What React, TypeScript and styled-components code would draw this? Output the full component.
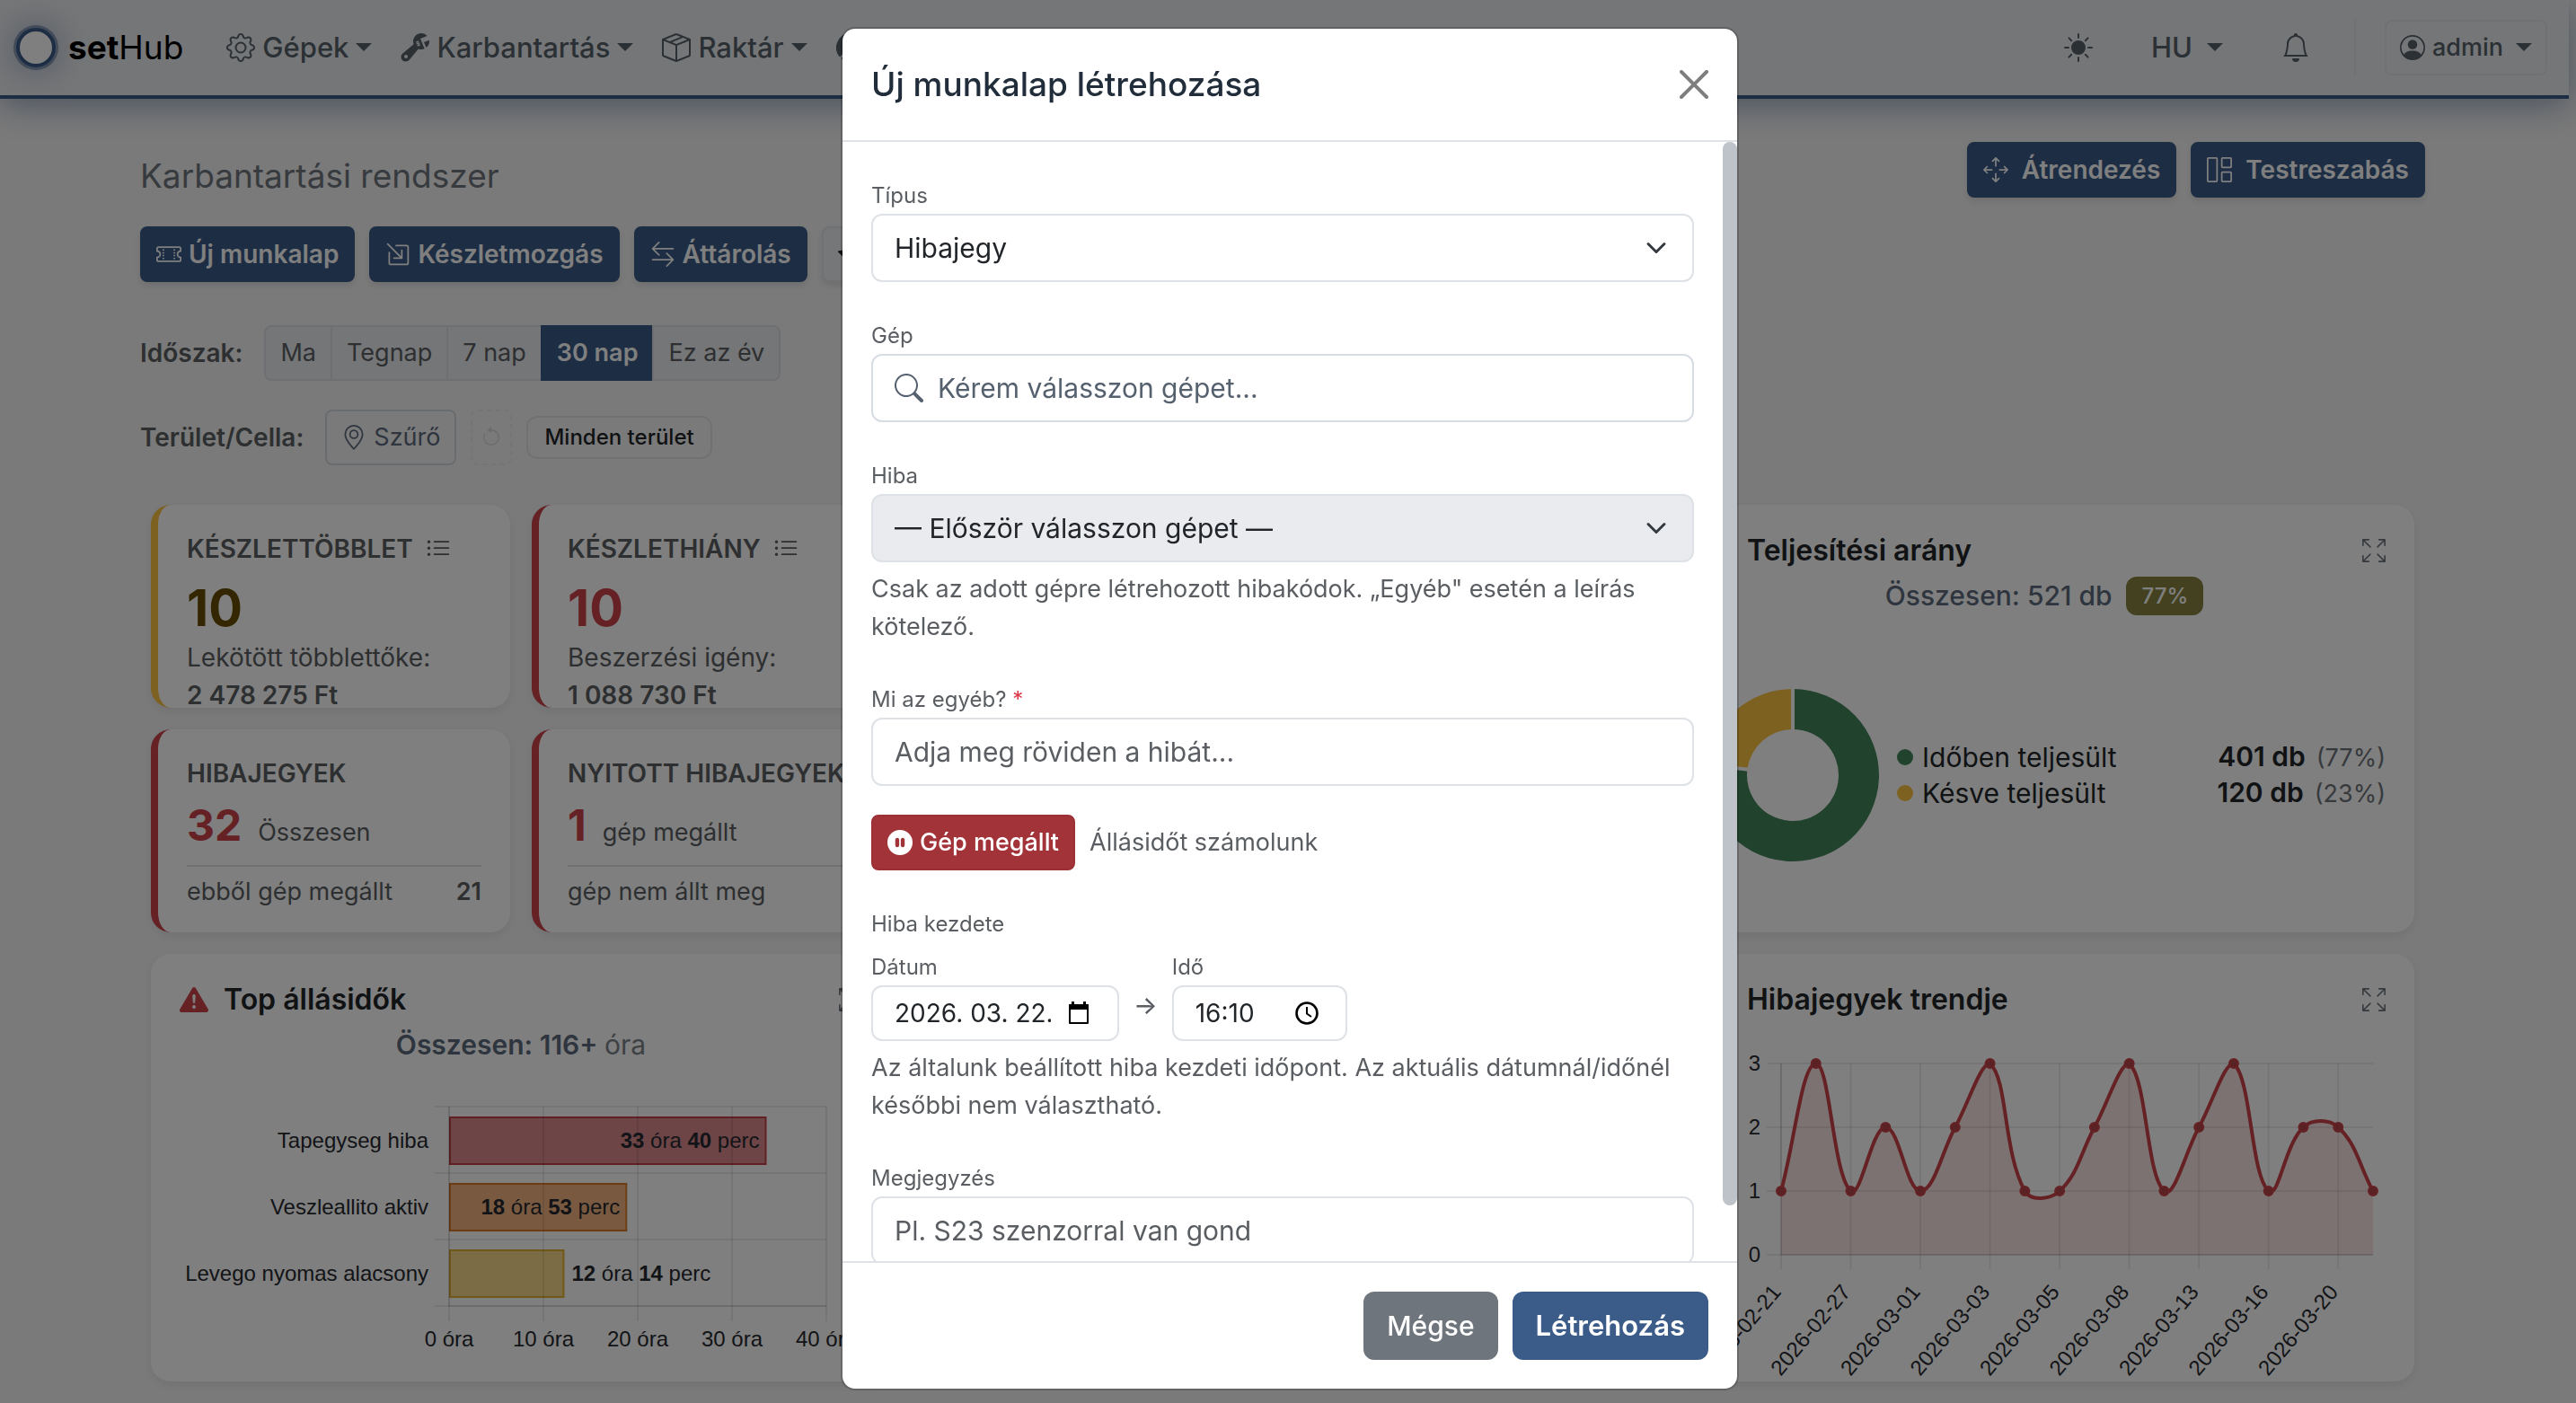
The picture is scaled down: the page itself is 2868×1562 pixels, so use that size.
import React from "react";
import styled, { createGlobalStyle, css } from "styled-components";
import {
  BsGear,
  BsWrenchAdjustable,
  BsBoxSeam,
  BsPieChartFill,
  BsSunFill,
  BsBell,
  BsPersonCircle,
  BsTicketPerforated,
  BsBoxArrowInDownRight,
  BsArrowLeftRight,
  BsStarFill,
  BsArrowsMove,
  BsGrid1X2,
  BsGeoAlt,
  BsArrowCounterclockwise,
  BsListUl,
  BsExclamationTriangleFill,
  BsArrowsFullscreen,
  BsCheckCircle,
  BsGraphUp,
  BsSearch,
  BsPauseCircleFill,
} from "react-icons/bs";

const color = {
  primary: "#3b5b88",
  ink: "#212529",
  slate: "#5c6b7c",
  muted: "#5a5e62",
  line: "#dee2e6",
  red: "#ca4248",
  yellow: "#f8c343",
  green: "#42855b",
};

const GlobalStyle = createGlobalStyle`
  *, *::before, *::after { box-sizing: border-box; }
  body {
    margin: 0;
    background: #f5f5f5;
    color: ${color.ink};
    font-family: Inter, "Liberation Sans", sans-serif;
    font-size: 28px;
    line-height: 42px;
  }
  button, input, select { font-family: inherit; margin: 0; }
  h1, h2, h3, p, ul { margin: 0; padding: 0; }
  ul { list-style: none; }
  svg { display: block; flex: none; }
`;

/* ---------- navigation ---------- */

const Navbar = styled.header`
  display: flex;
  align-items: center;
  justify-content: space-between;
  height: 110px;
  margin-right: 8px;
  padding: 0 24px 0 18px;
  background: #ebedf0;
  border-bottom: 4px solid ${color.primary};
  box-shadow: 0 8px 36px rgba(60, 90, 136, 0.5);
`;

const NavSide = styled.div`
  display: flex;
  align-items: center;
`;

const Brand = styled.a`
  display: flex;
  align-items: center;
  gap: 14px;
  margin-right: 48px;
  color: #000;
  font-size: 37px;
  line-height: 60px;
  text-decoration: none;
  b { font-weight: 700; }
`;

const BrandMark = styled.span`
  width: 44px;
  height: 44px;
  border: 4px solid ${color.primary};
  border-radius: 50%;
  background: #fff;
  box-shadow: 0 0 0 3px rgba(60, 90, 136, 0.5), 0 0 40px rgba(60, 90, 136, 0.6);
`;

const NavMenu = styled.nav`
  display: flex;
  gap: 32px;
`;

const NavButton = styled.button`
  display: flex;
  align-items: center;
  gap: 8px;
  padding: 0;
  border: 0;
  background: none;
  color: #56606b;
  font-size: 31px;
  font-weight: 500;
  line-height: 48px;
`;

const Caret = styled.span`
  margin-bottom: 2px;
  border-top: 9px solid currentColor;
  border-left: 9px solid transparent;
  border-right: 9px solid transparent;
`;

const NavTools = styled(NavSide)`
  gap: 65px;
`;

const LanguageButton = styled(NavButton)`
  gap: 16px;
`;

const AccountArea = styled.div`
  display: flex;
  align-items: center;
  height: 62px;
  margin-left: -16px;
  padding-left: 32px;
  border-left: 2px solid ${color.line};
`;

const AccountButton = styled(NavButton)`
  height: 62px;
  padding: 0 15px;
  border: 2px solid ${color.line};
  border-radius: 8px;
  font-size: 27px;
  ${Caret} { margin-left: 6px; }
`;

/* ---------- page head ---------- */

const Page = styled.main`
  padding: 48px 168px 24px 156px;
`;

const PageHead = styled.div`
  display: flex;
  justify-content: space-between;
  align-items: flex-start;
`;

const PageTitle = styled.h1`
  padding-top: 14px;
  margin-bottom: 32px;
  color: #6f757c;
  font-size: 37px;
  font-weight: 400;
  line-height: 48px;
`;

const Actions = styled.div<{ $iconGap?: number }>`
  display: flex;
  gap: 16px;
  button { gap: ${(p) => p.$iconGap ?? 8}px; }
`;

const Button = styled.button<{ $plain?: boolean }>`
  display: flex;
  align-items: center;
  height: 62px;
  padding: 0 16px;
  border: 2px solid ${(p) => (p.$plain ? color.line : color.primary)};
  border-radius: 8px;
  background: ${(p) => (p.$plain ? "#eceef1" : color.primary)};
  color: ${(p) => (p.$plain ? color.ink : "#fff")};
  box-shadow: 0 4px 8px rgba(0, 0, 0, 0.1);
  font-size: 28px;
  font-weight: 600;
  line-height: 42px;
`;

const FilterRow = styled.div`
  display: flex;
  align-items: center;
  gap: 16px;
  height: 62px;
`;

const Filters = styled.section`
  display: flex;
  flex-direction: column;
  gap: 32px;
  margin: 48px 0 44px;
`;

const FilterLabel = styled.span`
  margin-right: 8px;
  color: ${color.muted};
  font-weight: 600;
`;

const Segments = styled.div`
  display: flex;
`;

const Segment = styled.button<{ $active?: boolean }>`
  height: 62px;
  padding: 0 16px;
  border: 2px solid ${(p) => (p.$active ? color.primary : "#dcdfe4")};
  background: ${(p) => (p.$active ? color.primary : "#ebedf0")};
  color: ${(p) => (p.$active ? "#fff" : color.muted)};
  font-size: 27px;
  font-weight: ${(p) => (p.$active ? 600 : 400)};
  line-height: 42px;
  &:not(:first-child) { margin-left: -2px; }
  &:first-child { border-radius: 8px 0 0 8px; }
  &:last-child { border-radius: 0 8px 8px 0; }
`;

const FilterButton = styled.button`
  display: flex;
  align-items: center;
  gap: 8px;
  height: 62px;
  padding: 0 16px;
  border: 2px solid #d3d8df;
  border-radius: 8px;
  background: transparent;
  color: ${color.slate};
  font-size: 27px;
  line-height: 42px;
`;

const ResetButton = styled(FilterButton)`
  padding: 0 9px;
  border: 2px dashed ${color.line};
  color: #b9bec4;
  opacity: 0.5;
`;

const AreaTag = styled.span`
  padding: 0 18px;
  border: 2px solid ${color.line};
  border-radius: 12px;
  color: ${color.ink};
  font-size: 24px;
  font-weight: 500;
  line-height: 44px;
`;

/* ---------- dashboard ---------- */

const Board = styled.section`
  display: grid;
  grid-template-columns: repeat(6, minmax(0, 1fr));
  grid-auto-rows: 226px;
  gap: 24px;
  margin: 0 12px;
`;

const cardBase = css`
  overflow: hidden;
  border-radius: 22px;
  background: #fff;
  box-shadow: 0 4px 12px rgba(0, 0, 0, 0.08);
`;

const StatCard = styled.article<{ $accent: string; $column: number }>`
  ${cardBase}
  grid-column: ${(p) => p.$column};
  padding: 32px 32px 0;
  border-left: 8px solid ${(p) => p.$accent};
  color: ${color.muted};
`;

const StatTitle = styled.h3`
  display: flex;
  align-items: center;
  gap: 14px;
  font-size: 28px;
  font-weight: 600;
  line-height: 34px;
  white-space: nowrap;
`;

const StatNumber = styled.p<{ $tone: string }>`
  margin-top: 16px;
  color: ${(p) => p.$tone};
  font-size: 56px;
  font-weight: 700;
  line-height: 67px;
`;

const StatLine = styled.p`
  display: flex;
  align-items: baseline;
  gap: 18px;
  height: 58px;
  margin-top: 12px;
  font-size: 27px;
  line-height: 58px;
  b {
    color: ${color.red};
    font-size: 48px;
    font-weight: 700;
  }
`;

const StatFoot = styled.p`
  display: flex;
  justify-content: space-between;
  margin-top: 15px;
  padding-top: 7px;
  border-top: 2px solid ${color.line};
  font-size: 27px;
`;

const Strong = styled.strong`
  font-weight: 600;
`;

const ChartCard = styled.article<{ $column: number }>`
  ${cardBase}
  display: flex;
  flex-direction: column;
  grid-column: ${(p) => p.$column} / span 2;
  grid-row: span 2;
  padding: 32px 32px 0;
`;

const ChartHead = styled.div`
  display: flex;
  align-items: center;
  gap: 17px;
  height: 38px;
  h2 {
    flex: 1;
    color: ${color.ink};
    font-size: 32px;
    font-weight: 600;
    line-height: 38px;
  }
`;

const ExpandButton = styled.button`
  padding: 0;
  border: 0;
  background: none;
  color: #6c757d;
`;

const ChartTotal = styled.p`
  display: flex;
  align-items: center;
  justify-content: center;
  gap: 16px;
  margin-top: 7px;
  color: ${color.slate};
  font-size: 30px;
  font-weight: 600;
  line-height: 48px;
  small {
    color: #7c8288;
    font-size: 30px;
    font-weight: 400;
  }
`;

const Medium = styled.span`
  font-weight: 500;
`;

const Badge = styled.span`
  padding: 0 17px;
  border-radius: 12px;
  background: #86823f;
  color: #fff;
  font-size: 24px;
  font-weight: 500;
  line-height: 43px;
`;

const DonutBody = styled.div`
  display: flex;
  flex: 1;
  align-items: center;
  gap: 16px;
`;

const Legend = styled.ul`
  flex: 1;
  color: ${color.ink};
  font-size: 30px;
  line-height: 40px;
`;

const LegendRow = styled.li`
  display: flex;
  align-items: center;
  gap: 10px;
  height: 40px;
`;

const Dot = styled.span<{ $fill: string }>`
  width: 18px;
  height: 18px;
  border-radius: 50%;
  background: ${(p) => p.$fill};
`;

const LegendValue = styled.span`
  margin-left: auto;
  small {
    margin-left: 12px;
    color: #6f757b;
    font-size: 27px;
  }
`;

const Plot = styled.svg`
  width: 100%;
  height: auto;
  overflow: visible;
  font-family: "Liberation Sans", Arial, sans-serif;
  font-size: 24px;
`;

/* ---------- dialog ---------- */

const Backdrop = styled.div`
  position: fixed;
  inset: 0;
  display: flex;
  justify-content: center;
  padding: 30px 0 14px 4px;
  background: rgba(0, 0, 0, 0.5);
`;

const Dialog = styled.form`
  display: flex;
  flex-direction: column;
  width: 1000px;
  overflow: hidden;
  border: 2px solid rgba(0, 0, 0, 0.18);
  border-radius: 16px;
  background: #fff;
  background-clip: padding-box;
`;

const DialogHead = styled.div`
  display: flex;
  align-items: center;
  justify-content: space-between;
  height: 126px;
  padding: 0 32px;
  border-bottom: 2px solid ${color.line};
  h2 {
    color: #212d3a;
    font-size: 37px;
    font-weight: 500;
    line-height: 60px;
  }
`;

const CloseButton = styled.button`
  padding: 0;
  border: 0;
  background: none;
  color: #000;
  opacity: 0.5;
`;

const DialogMain = styled.div`
  display: flex;
  flex: 1;
  min-height: 0;
`;

const DialogBody = styled.div`
  display: flex;
  flex: 1;
  flex-direction: column;
  gap: 42px;
  min-width: 0;
  overflow: hidden;
  padding: 42px 32px;
`;

const ScrollRail = styled.div`
  width: 16px;
`;

const ScrollThumb = styled.div`
  height: 95%;
  border-radius: 8px;
  background: #bdc3c8;
`;

const Field = styled.div`
  flex: none;
`;

const Label = styled.label`
  display: block;
  margin-bottom: 2px;
  color: ${color.muted};
  font-size: 24px;
  line-height: 36px;
  em {
    color: #dc3545;
    font-style: normal;
  }
`;

const controlStyle = css`
  display: block;
  width: 100%;
  height: 76px;
  padding: 0 24px;
  border: 2px solid ${color.line};
  border-radius: 12px;
  background: #fff;
  color: ${color.ink};
  font-size: 30px;
  line-height: 48px;
  outline: 0;
  &::placeholder { color: ${color.muted}; opacity: 1; }
`;

const Input = styled.input`
  ${controlStyle}
`;

const Select = styled.select`
  ${controlStyle}
  appearance: none;
  &:disabled { background: #e9ebef; opacity: 1; }
`;

const SelectBox = styled.div`
  position: relative;
  svg {
    position: absolute;
    top: 26px;
    right: 30px;
    pointer-events: none;
  }
`;

const SearchBox = styled.div`
  display: flex;
  align-items: center;
  gap: 16px;
  height: 76px;
  padding: 0 24px;
  border: 2px solid #d6dce2;
  border-radius: 12px;
  color: #56616f;
  input {
    flex: 1;
    min-width: 0;
    padding: 0;
    border: 0;
    outline: 0;
    color: inherit;
    font-size: 30px;
    line-height: 48px;
  }
  input::placeholder { color: inherit; opacity: 1; }
`;

const Help = styled.p`
  margin-top: 9px;
  color: ${color.muted};
  font-size: 27px;
`;

const StopRow = styled.div`
  display: flex;
  align-items: center;
  gap: 16px;
  margin-top: 32px;
  color: ${color.muted};
  font-size: 27px;
`;

const StopButton = styled.button`
  display: flex;
  align-items: center;
  gap: 8px;
  height: 62px;
  padding: 0 16px;
  border: 2px solid #9b3036;
  border-radius: 8px;
  background: #a23439;
  color: #fff;
  font-size: 27px;
  font-weight: 500;
  line-height: 42px;
`;

const GroupLabel = styled.p`
  margin-bottom: 12px;
  color: ${color.muted};
  font-size: 24px;
  line-height: 36px;
`;

const MomentRow = styled.div`
  display: flex;
  align-items: center;
  gap: 16px;
  color: ${color.muted};
`;

const Arrow = styled.span`
  padding-top: 20px;
  font-weight: 500;
`;

const Picker = styled.div<{ $width: number }>`
  width: ${(p) => p.$width}px;
`;

const PickerBox = styled.div`
  display: flex;
  align-items: center;
  justify-content: space-between;
  height: 62px;
  padding: 0 30px 0 24px;
  border: 2px solid ${color.line};
  border-radius: 12px;
  input {
    width: 80%;
    min-width: 0;
    padding: 0;
    border: 0;
    outline: 0;
    background: none;
    color: ${color.ink};
    font-size: 28px;
    line-height: 42px;
  }
`;

const DialogFoot = styled.div`
  display: flex;
  justify-content: flex-end;
  gap: 16px;
  padding: 32px;
  border-top: 2px solid ${color.line};
`;

const FootButton = styled.button<{ $main?: boolean }>`
  height: 76px;
  padding: 0 26px;
  border: 0;
  border-radius: 12px;
  background: ${(p) => (p.$main ? color.primary : "#6e757c")};
  color: #fff;
  font-size: ${(p) => (p.$main ? 31 : 30)}px;
  font-weight: ${(p) => (p.$main ? 600 : 500)};
  line-height: 48px;
`;

/* ---------- charts ---------- */

const downtime = [
  { label: "Tapegyseg hiba", hours: 33, minutes: 40, fill: "#db8a8e", stroke: "#c24248" },
  { label: "Veszleallito aktiv", hours: 18, minutes: 53, fill: "#f3b583", stroke: "#d97b24" },
  { label: "Levego nyomas alacsony", hours: 12, minutes: 14, fill: "#f7d98b", stroke: "#e0b030" },
];

function DowntimeChart() {
  const x0 = 300;
  const step = 105;
  const top = 45;
  const row = 74;
  const bottom = top + row * 3 + 1;
  return (
    <Plot viewBox="0 0 760 340">
      {downtime.map((d, i) => {
        const w = ((d.hours + d.minutes / 60) * step) / 10;
        return (
          <rect
            key={d.label}
            x={x0 + 1}
            y={top + 12 + row * i}
            width={w - 2}
            height={52}
            fill={d.fill}
            stroke={d.stroke}
            strokeWidth={2}
          />
        );
      })}
      <g stroke="#000" strokeOpacity={0.08} strokeWidth={2}>
        {[0, 1, 2, 3, 4].map((i) => (
          <line key={i} x1={x0 + i * step} x2={x0 + i * step} y1={top} y2={bottom + 16} />
        ))}
        {[0, 1, 2, 3].map((i) => (
          <line key={i} x1={x0 - 16} x2={x0 + step * 4} y1={top + i * row} y2={top + i * row} />
        ))}
        <line x1={x0} x2={x0} y1={top} y2={bottom} />
        <line x1={x0} x2={x0 + step * 4} y1={bottom - 1} y2={bottom - 1} />
      </g>
      {downtime.map((d, i) => {
        const w = ((d.hours + d.minutes / 60) * step) / 10;
        const inside = w > 180;
        const y = top + 46 + row * i;
        return (
          <g key={d.label} fill="#26292e">
            <text x={277} y={y} textAnchor="end">{d.label}</text>
            <text x={x0 + (inside ? w - 8 : w + 8)} y={y} textAnchor={inside ? "end" : "start"}>
              <tspan fontWeight={700}>{d.hours}</tspan> óra <tspan fontWeight={700}>{d.minutes}</tspan> perc
            </text>
          </g>
        );
      })}
      {[0, 10, 20, 30, 40].map((h, i) => (
        <text key={h} x={x0 + i * step} y={312} textAnchor="middle" fill="#26292e">
          {h} óra
        </text>
      ))}
    </Plot>
  );
}

const trend = [1, 3, 1, 2, 1, 2, 3, 1, 1, 2, 3, 1, 2, 3, 1, 2, 2, 1];
const trendDates = [
  "2026-02-21", "2026-02-27", "2026-03-01", "2026-03-03", "2026-03-05",
  "2026-03-08", "2026-03-13", "2026-03-16", "2026-03-20",
];

function TrendChart() {
  const left = 87;
  const right = 746;
  const top = 52;
  const unit = 71;
  const base = top + unit * 3;
  const gap = (right - left) / (trend.length - 1);
  const pts = trend.map((v, i) => ({ x: left + i * gap, y: base - v * unit }));
  const tension = 0.4;
  const clamp = (y: number) => Math.max(top, Math.min(base, y));
  const handles = pts.map((p, i) => {
    const prev = pts[i - 1] ?? p;
    const next = pts[i + 1] ?? p;
    const a = Math.hypot(p.x - prev.x, p.y - prev.y);
    const b = Math.hypot(next.x - p.x, next.y - p.y);
    const fa = (tension * a) / (a + b);
    const fb = (tension * b) / (a + b);
    return {
      before: { x: p.x - fa * (next.x - prev.x), y: clamp(p.y - fa * (next.y - prev.y)) },
      after: { x: p.x + fb * (next.x - prev.x), y: clamp(p.y + fb * (next.y - prev.y)) },
    };
  });
  let line = `M${pts[0].x} ${pts[0].y}`;
  for (let i = 1; i < pts.length; i++) {
    const c1 = handles[i - 1].after;
    const c2 = handles[i].before;
    line += `C${c1.x} ${c1.y} ${c2.x} ${c2.y} ${pts[i].x} ${pts[i].y}`;
  }
  return (
    <Plot viewBox="0 0 760 406">
      <g stroke="#000" strokeOpacity={0.08} strokeWidth={2}>
        {[0, 1, 2, 3].map((v) => (
          <line key={v} x1={left - 16} x2={right} y1={base - v * unit} y2={base - v * unit} />
        ))}
        {trendDates.map((d, i) => (
          <line key={d} x1={left + i * 2 * gap} x2={left + i * 2 * gap} y1={top} y2={base + 16} />
        ))}
        <line x1={left} x2={left} y1={top} y2={base} />
        <line x1={left} x2={right} y1={base} y2={base} />
      </g>
      <path d={`${line}L${right} ${base}L${left} ${base}Z`} fill="#c8463c" fillOpacity={0.14} />
      <path d={line} fill="none" stroke={color.red} strokeWidth={4} />
      {pts.map((p, i) => (
        <circle key={i} cx={p.x} cy={p.y} r={5} fill="#b5454a" stroke={color.red} strokeWidth={2} />
      ))}
      {[0, 1, 2, 3].map((v) => (
        <text key={v} x={64} y={base - v * unit + 8} textAnchor="end" fill="#26292e">{v}</text>
      ))}
      {trendDates.map((d, i) => (
        <text
          key={d}
          transform={`translate(${left + i * 2 * gap + 1} 307) rotate(-50)`}
          textAnchor="end"
          fill="#26292e"
        >
          {d}
        </text>
      ))}
    </Plot>
  );
}

function Donut() {
  const r = 96;
  const inner = 51;
  const at = (share: number, radius: number) => {
    const t = share * Math.PI * 2;
    return `${100 + radius * Math.sin(t)} ${100 - radius * Math.cos(t)}`;
  };
  const slice = (from: number, to: number) => {
    const big = to - from > 0.5 ? 1 : 0;
    return `M${at(from, r)}A${r} ${r} 0 ${big} 1 ${at(to, r)}L${at(to, inner)}A${inner} ${inner} 0 ${big} 0 ${at(from, inner)}Z`;
  };
  const split = 401 / 521;
  return (
    <svg width={200} height={200} viewBox="0 0 200 200">
      <path d={slice(0, split)} fill={color.green} />
      <path d={slice(split, 1)} fill={color.yellow} />
      <path d={`M${at(0, 50)}L${at(0, 98)}M${at(split, 50)}L${at(split, 98)}`} stroke="#fff" strokeWidth={4} />
    </svg>
  );
}

/* ---------- small drawings ---------- */

const Chevron = () => (
  <svg width={24} height={24} viewBox="0 0 16 16" fill="none" stroke="#343a40" strokeWidth={2} strokeLinecap="round" strokeLinejoin="round">
    <path d="m2 5 6 6 6-6" />
  </svg>
);

const CloseIcon = () => (
  <svg width={32} height={32} viewBox="0 0 16 16" fill="currentColor">
    <path d="M.293.293a1 1 0 0 1 1.414 0L8 6.586 14.293.293a1 1 0 1 1 1.414 1.414L9.414 8l6.293 6.293a1 1 0 0 1-1.414 1.414L8 9.414l-6.293 6.293a1 1 0 0 1-1.414-1.414L6.586 8 .293 1.707a1 1 0 0 1 0-1.414z" />
  </svg>
);

const CalendarIcon = () => (
  <svg width={26} height={26} viewBox="0 0 26 26">
    <path d="M3 4h20v20H3z" fill="none" stroke="#000" strokeWidth={2} strokeLinejoin="round" />
    <path d="M2 3h22v6H2zM5 0h3v4H5zM18 0h3v4h-3z" fill="#000" />
  </svg>
);

const ClockIcon = () => (
  <svg width={26} height={26} viewBox="0 0 26 26" fill="none" stroke="#000">
    <circle cx={13} cy={13} r={11.5} strokeWidth={2.6} />
    <path d="M13 6v7.5l5 3.5" strokeWidth={2} />
  </svg>
);

const Expand = () => (
  <ExpandButton type="button" aria-label="Nagyítás">
    <BsArrowsFullscreen size={26} />
  </ExpandButton>
);

export default function App() {
  return (
    <>
      <GlobalStyle />
      <Navbar>
        <NavSide>
          <Brand href="#">
            <BrandMark />
            <span>
              <b>set</b>Hub
            </span>
          </Brand>
          <NavMenu>
            <NavButton type="button"><BsGear size={32} />Gépek<Caret /></NavButton>
            <NavButton type="button"><BsWrenchAdjustable size={32} />Karbantartás<Caret /></NavButton>
            <NavButton type="button"><BsBoxSeam size={32} />Raktár<Caret /></NavButton>
            <NavButton type="button" aria-label="Továbbiak"><BsPieChartFill size={32} /></NavButton>
          </NavMenu>
        </NavSide>
        <NavTools>
          <NavButton type="button" aria-label="Téma"><BsSunFill size={32} /></NavButton>
          <LanguageButton type="button">HU<Caret /></LanguageButton>
          <NavButton type="button" aria-label="Értesítések"><BsBell size={32} /></NavButton>
          <AccountArea>
            <AccountButton type="button"><BsPersonCircle size={28} />admin<Caret /></AccountButton>
          </AccountArea>
        </NavTools>
      </Navbar>

      <Page>
        <PageHead>
          <div>
            <PageTitle>Karbantartási rendszer</PageTitle>
            <Actions>
              <Button type="button"><BsTicketPerforated size={28} />Új munkalap</Button>
              <Button type="button"><BsBoxArrowInDownRight size={28} />Készletmozgás</Button>
              <Button type="button"><BsArrowLeftRight size={28} />Áttárolás</Button>
              <Button type="button" $plain aria-label="Kedvencek"><BsStarFill size={28} /></Button>
            </Actions>
          </div>
          <Actions $iconGap={15}>
            <Button type="button"><BsArrowsMove size={28} />Átrendezés</Button>
            <Button type="button"><BsGrid1X2 size={28} />Testreszabás</Button>
          </Actions>
        </PageHead>

        <Filters>
          <FilterRow>
            <FilterLabel>Időszak:</FilterLabel>
            <Segments>
              <Segment type="button">Ma</Segment>
              <Segment type="button">Tegnap</Segment>
              <Segment type="button">7 nap</Segment>
              <Segment type="button" $active>30 nap</Segment>
              <Segment type="button">Ez az év</Segment>
            </Segments>
          </FilterRow>
          <FilterRow>
            <FilterLabel>Terület/Cella:</FilterLabel>
            <FilterButton type="button"><BsGeoAlt size={28} />Szűrő</FilterButton>
            <ResetButton type="button" disabled aria-label="Visszaállítás"><BsArrowCounterclockwise size={24} /></ResetButton>
            <AreaTag>Minden terület</AreaTag>
          </FilterRow>
        </Filters>

        <Board>
          <StatCard $accent={color.yellow} $column={1}>
            <StatTitle>KÉSZLETTÖBBLET<BsListUl size={28} /></StatTitle>
            <StatNumber $tone="#664d03">10</StatNumber>
            <p>Lekötött többlettőke:</p>
            <p><Strong>2 478 275 Ft</Strong></p>
          </StatCard>
          <StatCard $accent={color.red} $column={2}>
            <StatTitle>KÉSZLETHIÁNY<BsListUl size={28} /></StatTitle>
            <StatNumber $tone={color.red}>10</StatNumber>
            <p>Beszerzési igény:</p>
            <p><Strong>1 088 730 Ft</Strong></p>
          </StatCard>
          <ChartCard $column={5}>
            <ChartHead>
              <BsCheckCircle size={32} color={color.green} />
              <h2>Teljesítési arány</h2>
              <Expand />
            </ChartHead>
            <ChartTotal>
              <Medium>Összesen: 521 db</Medium>
              <Badge>77%</Badge>
            </ChartTotal>
            <DonutBody>
              <Donut />
              <Legend>
                <LegendRow>
                  <Dot $fill={color.green} />
                  Időben teljesült
                  <LegendValue><Strong>401 db</Strong><small>(77%)</small></LegendValue>
                </LegendRow>
                <LegendRow>
                  <Dot $fill={color.yellow} />
                  Késve teljesült
                  <LegendValue><Strong>120 db</Strong><small>(23%)</small></LegendValue>
                </LegendRow>
              </Legend>
            </DonutBody>
          </ChartCard>
          <StatCard $accent={color.red} $column={1}>
            <StatTitle>HIBAJEGYEK</StatTitle>
            <StatLine><b>32</b>Összesen</StatLine>
            <StatFoot>ebből gép megállt<Strong>21</Strong></StatFoot>
          </StatCard>
          <StatCard $accent={color.red} $column={2}>
            <StatTitle>NYITOTT HIBAJEGYEK</StatTitle>
            <StatLine><b>1</b>gép megállt</StatLine>
            <StatFoot>gép nem állt meg</StatFoot>
          </StatCard>
          <ChartCard $column={1}>
            <ChartHead>
              <BsExclamationTriangleFill size={32} color={color.red} />
              <h2>Top állásidők</h2>
              <Expand />
            </ChartHead>
            <ChartTotal>
              <span>Összesen: 116+ <small>óra</small></span>
            </ChartTotal>
            <DowntimeChart />
          </ChartCard>
          <ChartCard $column={5}>
            <ChartHead>
              <BsGraphUp size={32} color={color.red} />
              <h2>Hibajegyek trendje</h2>
              <Expand />
            </ChartHead>
            <TrendChart />
          </ChartCard>
        </Board>
      </Page>

      <Backdrop>
        <Dialog role="dialog" aria-labelledby="dialog-title" onSubmit={(e) => e.preventDefault()}>
          <DialogHead>
            <h2 id="dialog-title">Új munkalap létrehozása</h2>
            <CloseButton type="button" aria-label="Bezárás"><CloseIcon /></CloseButton>
          </DialogHead>
          <DialogMain>
            <DialogBody>
              <Field>
                <Label htmlFor="type">Típus</Label>
                <SelectBox>
                  <Select id="type" defaultValue="issue">
                    <option value="issue">Hibajegy</option>
                  </Select>
                  <Chevron />
                </SelectBox>
              </Field>
              <Field>
                <Label htmlFor="machine">Gép</Label>
                <SearchBox>
                  <BsSearch size={32} />
                  <input id="machine" type="text" placeholder="Kérem válasszon gépet..." />
                </SearchBox>
              </Field>
              <Field>
                <Label htmlFor="fault">Hiba</Label>
                <SelectBox>
                  <Select id="fault" disabled>
                    <option>— Először válasszon gépet —</option>
                  </Select>
                  <Chevron />
                </SelectBox>
                <Help>Csak az adott gépre létrehozott hibakódok. „Egyéb" esetén a leírás kötelező.</Help>
              </Field>
              <Field>
                <Label htmlFor="other">Mi az egyéb? <em>*</em></Label>
                <Input id="other" type="text" placeholder="Adja meg röviden a hibát..." />
                <StopRow>
                  <StopButton type="button"><BsPauseCircleFill size={28} />Gép megállt</StopButton>
                  Állásidőt számolunk
                </StopRow>
              </Field>
              <Field>
                <GroupLabel>Hiba kezdete</GroupLabel>
                <MomentRow>
                  <Picker $width={276}>
                    <Label htmlFor="date">Dátum</Label>
                    <PickerBox>
                      <input id="date" type="text" defaultValue="2026. 03. 22." />
                      <CalendarIcon />
                    </PickerBox>
                  </Picker>
                  <Arrow>→</Arrow>
                  <Picker $width={195}>
                    <Label htmlFor="time">Idő</Label>
                    <PickerBox>
                      <input id="time" type="text" defaultValue="16:10" />
                      <ClockIcon />
                    </PickerBox>
                  </Picker>
                </MomentRow>
                <Help>Az általunk beállított hiba kezdeti időpont. Az aktuális dátumnál/időnél későbbi nem választható.</Help>
              </Field>
              <Field>
                <Label htmlFor="note">Megjegyzés</Label>
                <Input id="note" type="text" placeholder="Pl. S23 szenzorral van gond" />
              </Field>
            </DialogBody>
            <ScrollRail><ScrollThumb /></ScrollRail>
          </DialogMain>
          <DialogFoot>
            <FootButton type="button">Mégse</FootButton>
            <FootButton type="submit" $main>Létrehozás</FootButton>
          </DialogFoot>
        </Dialog>
      </Backdrop>
    </>
  );
}
